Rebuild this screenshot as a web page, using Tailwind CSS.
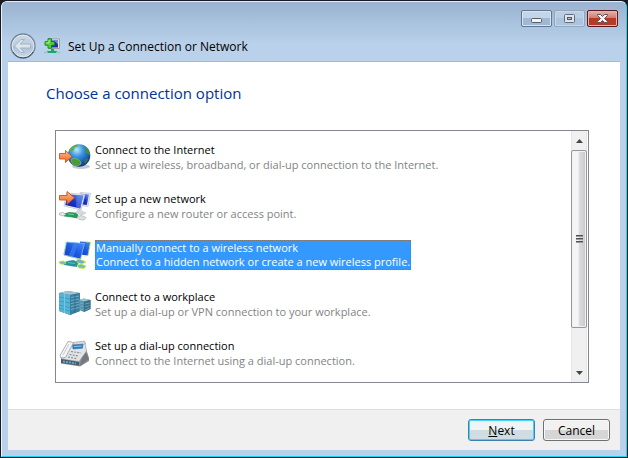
<!DOCTYPE html>
<html lang="en">
  <head>
    <meta charset="UTF-8" />
    <meta name="viewport" content="width=device-width, initial-scale=1.0" />
    <title>Set Up a Connection or Network</title>
    <script src="https://cdn.jsdelivr.net/npm/@tailwindcss/browser@4"></script>
  </head>
  <body class="bg-[#171a20] font-['Open_Sans','Noto_Sans',sans-serif] text-[11px] leading-[15px] text-black">
    <!-- window frame -->
    <div class="min-h-screen p-px">
      <div
        class="flex min-h-[calc(100vh-2px)] flex-col rounded-t-[6px] border border-t-[#e4edf6] border-r-[#22d3ee] border-b-[#22d3ee] border-l-[#eaf3fb] bg-[#b9d1ea] px-[6px] pb-[6px]"
      >
        <header class="-mx-[6px] rounded-t-[5px] bg-linear-to-b from-[#99b3d0] to-[#b9d1ea] to-70% px-[6px]">
          <div class="flex h-[30px] items-start justify-end gap-[2px] pt-2 pr-[2px]">
            <button
              aria-label="Minimize"
              class="flex h-[17px] w-[31px] items-center justify-center rounded-[2px] border border-[#62778f] bg-linear-to-b from-[#c3d5e9] from-50% to-[#9fb9d4] to-50% shadow-[inset_0_0_0_1px_#d8e5f3]"
            >
              <svg class="h-[13px] w-[13px]" viewBox="0 0 13 13">
                <rect x="1.5" y="6.5" width="10" height="4" rx="1" fill="#f4f4f4" stroke="#555b69" />
              </svg>
            </button>
            <button
              aria-label="Maximize"
              disabled
              class="flex h-[17px] w-[31px] items-center justify-center rounded-[2px] border border-[#91a7c0] bg-linear-to-b from-[#b9cee5] from-50% to-[#abc4df] to-50% shadow-[inset_0_0_0_1px_#c6d8eb]"
            >
              <svg class="h-[13px] w-[13px]" viewBox="0 0 13 13">
                <rect x="1.5" y="2.5" width="10" height="8" rx="1" fill="#e1e3e8" stroke="#666b79" />
                <rect x="4.5" y="5.5" width="4" height="2" fill="#a8c0dc" stroke="#50586a" />
              </svg>
            </button>
            <button
              aria-label="Close"
              class="flex h-[17px] w-[31px] items-center justify-center rounded-[2px] border border-[#5b1825] bg-linear-to-b from-[#e0a99c] from-10% via-[#d0796a] via-48% to-[#b83a24] to-50% shadow-[inset_0_0_0_1px_#e6b5aa]"
            >
              <svg class="h-[13px] w-[13px]" viewBox="0 0 13 13">
                <path
                  d="M1.500 2.500h3l2 2 2-2h3v1l-3 3 3 3v1h-3l-2-2-2 2h-3v-1l3-3-3-3z"
                  fill="#f5f5f5"
                  stroke="#54565f"
                />
              </svg>
            </button>
          </div>
          <div class="flex h-[30px] items-center gap-2 border-b border-[#a3bad3] pb-px pl-[2px]">
            <button aria-label="Back" disabled class="h-[26px] w-[26px]">
              <svg class="h-[26px] w-[26px]" viewBox="0 0 26 26">
                <defs>
                  <linearGradient id="back" x1="0" y1="0" x2="0" y2="1">
                    <stop offset="0" stop-color="#ccd9e6" />
                    <stop offset=".48" stop-color="#bdcddd" />
                    <stop offset=".5" stop-color="#a9bed2" />
                    <stop offset="1" stop-color="#c9dcec" />
                  </linearGradient>
                </defs>
                <circle cx="13" cy="13" r="12" fill="url(#back)" stroke="#748398" stroke-width="1.300" />
                <path d="M3 19a11.500 11.500 0 0 0 20 0" fill="none" stroke="#404c5e" />
                <circle cx="13" cy="13" r="10.800" fill="none" stroke="#dde8f1" />
                <path
                  d="M4.500 13l6.500-6.500h3.500l-4.300 4.500h10.300v4H10.200l4.300 4.500H11z"
                  fill="#dbe5ed"
                  stroke="#a3b5c6"
                  stroke-linejoin="round"
                />
              </svg>
            </button>
            <svg class="h-4 w-4" viewBox="0 0 16 16">
              <path d="M6 1h9.500v9.500H6z" fill="#e6e8e5" stroke="#8d9494" stroke-width=".8" />
              <path d="M7 2.500h7v7H7z" fill="#2430a4" />
              <path d="M10 2.500h4v4z" fill="#7c8be0" />
              <path d="M7 11h3v2h3v2H3v-2h4z" fill="#19a86b" />
              <path d="M0 14.500h4M12 14.500h4" stroke="#8ecfb4" stroke-width="1.500" />
              <path
                d="M4 .700h3.500v3h3v3.500h-3v3H4v-3H1V3.700h3z"
                fill="#4fd13d"
                stroke="#128415"
                stroke-width=".9"
              />
              <path d="M5 2v3H2.200" fill="none" stroke="#b7f5a4" />
            </svg>
            <span class="text-[12px]">Set Up a Connection or Network</span>
          </div>
        </header>

        <main class="flex flex-1 flex-col bg-white pt-5">
          <h1 class="px-[38px] text-[15px] leading-[22px] text-[#003399]">Choose a connection option</h1>

          <div class="mt-[26px] mr-[31px] mb-[26px] ml-[47px] flex flex-1 border border-[#828790]">
            <ul role="listbox" aria-label="Connection options" class="flex flex-1 flex-col gap-[17px] pt-[10px] pl-[3px]">
              <li role="option" class="flex h-8 items-center gap-1">
                <svg class="h-8 w-8" viewBox="0 0 32 32">
                  <defs>
                    <radialGradient id="globe" cx=".4" cy=".25" r=".75">
                      <stop offset="0" stop-color="#b9eaff" />
                      <stop offset=".4" stop-color="#3994df" />
                      <stop offset="1" stop-color="#0b3493" />
                    </radialGradient>
                    <linearGradient id="arrow" x1="0" y1="0" x2="0" y2="1">
                      <stop offset="0" stop-color="#ffb988" />
                      <stop offset="1" stop-color="#f0671e" />
                    </linearGradient>
                  </defs>
                  <ellipse cx="22" cy="25.500" rx="9" ry="2.500" fill="#c6c9cc" />
                  <circle cx="20" cy="14.500" r="11.300" fill="url(#globe)" />
                  <path d="M10.500 8.500c2-3 5-5 9-5l-1 2-3 1-1 3-3 1.500z" fill="#62ad45" />
                  <path d="M25 5c4 2 6 6 5.800 9l-3-1.500-2-4 .500-1.500z" fill="#47922e" />
                  <path d="M12 18.500c3-2 7-1 9.500 2l.500 2.500-4 2c-3 0-6-3-6-6.500z" fill="#4a9c30" stroke="#8bd062" stroke-width=".6" />
                  <path d="M27 17l2.500 1-3 4.500-1.500-1z" fill="#2f7e37" />
                  <path d="M.500 12.500h6v-3l6.500 6-6.500 6v-3.500h-6z" fill="url(#arrow)" stroke="#c25a26" stroke-width=".9" />
                </svg>
                <div>
                  <p>Connect to the Internet</p>
                  <p class="text-[#838383]">Set up a wireless, broadband, or dial-up connection to the Internet.</p>
                </div>
              </li>
              <li role="option" class="flex h-8 items-center gap-1">
                <svg class="h-8 w-8" viewBox="0 0 32 32">
                  <defs>
                    <linearGradient id="screen" x1="0" y1="1" x2="1" y2="0">
                      <stop offset="0" stop-color="#0718a5" />
                      <stop offset=".5" stop-color="#1836c8" />
                      <stop offset="1" stop-color="#7ea4f4" />
                    </linearGradient>
                  </defs>
                  <path d="M21 2.500l10.500.800-2.500 13.200-8-1z" fill="#e5e9ef" stroke="#b7bdc8" stroke-width=".7" />
                  <path d="M22 3.800l8 .700-2.200 10.500-6-.800z" fill="url(#screen)" />
                  <path d="M7.500 3l18.500 1.500-4 15.500L5 16z" fill="#edf0f4" stroke="#b9bfc9" stroke-width=".7" />
                  <path d="M8.500 4.200l16 1.300-3.300 13L6.300 15z" fill="url(#screen)" />
                  <path d="M17.500 4.900l7 .600-3.300 13-4-1z" fill="#5f83ea" opacity=".6" />
                  <path d="M19 20l3 .700 5 2.300-4 2-7-2z" fill="#d6dadd" stroke="#b5babf" stroke-width=".5" />
                  <path d="M5 24l5-1.500 6 .500 3 2-1 3-5-1-8-1z" fill="#19a258" stroke="#0b7a42" stroke-width=".6" />
                  <path d="M9 24l6 .500" stroke="#6fd39a" />
                  <path d="M.500 23l4-.500 2.500 2-3 1.500-3.500-1z" fill="#e3e7e6" stroke="#9faaa8" stroke-width=".6" />
                  <path d="M18 27l4-1.500 5 2-2 2.500-5-.500z" fill="#dce2e1" stroke="#9faaa8" stroke-width=".6" />
                  <path d="M.500 5.500H8v-4l7.500 6.300L8 14.300v-4.300H.500z" fill="url(#arrow)" stroke="#c25a26" stroke-width=".9" />
                </svg>
                <div>
                  <p>Set up a new network</p>
                  <p class="text-[#838383]">Configure a new router or access point.</p>
                </div>
              </li>
              <li role="option" aria-selected="true" class="flex h-8 items-center gap-1">
                <svg class="h-8 w-8" viewBox="0 0 32 32">
                  <defs>
                    <linearGradient id="screen2" x1="0" y1="1" x2="1" y2="0">
                      <stop offset="0" stop-color="#0a3cc4" />
                      <stop offset=".5" stop-color="#1d5be0" />
                      <stop offset="1" stop-color="#4a92fa" />
                    </linearGradient>
                  </defs>
                  <path d="M21 2.500l10.500.800-2.500 13.200-8-1z" fill="url(#screen2)" />
                  <path d="M22 2.300l9.500 1-2.500 13.200-4 .500" fill="none" stroke="#cbec28" stroke-dasharray="3 1" />
                  <path d="M7.500 3l18 1.500-4 15.500L5 16z" fill="url(#screen2)" stroke="#7fb6f5" stroke-width=".8" />
                  <path d="M15 3.800l4 .400-4.500 14-5-1z" fill="#4286f1" opacity=".6" />
                  <path d="M7 3l-2.500 13 17 4.500" fill="none" stroke="#b7de55" stroke-width=".8" stroke-dasharray="2 1.500" />
                  <path d="M19 20l3 .700 5 2.300-4 2-7-2z" fill="#6db0d6" stroke="#cbec28" stroke-width=".9" stroke-dasharray="3 1" />
                  <path d="M5 23.500l5-1.500 5-.500 4 3-1 3-5-.500-8-1.500z" fill="#2095a4" stroke="#187e8c" stroke-width=".6" />
                  <path d="M9 23.500l7 1" stroke="#5dc0c8" />
                  <path d="M.500 22.500l4-.500 2.500 2-3 1.500-3.500-1z" fill="#73bfb3" stroke="#cbec28" stroke-dasharray="2 1" />
                  <path d="M18 26.500l4-1.500 5 2-2 2.500-5-.500z" fill="#73bfb3" stroke="#cbec28" stroke-dasharray="3 1" />
                </svg>
                <div class="border border-dotted border-[#cc6600] bg-[#3399ff] text-white">
                  <p class="leading-[14px]">Manually connect to a wireless network</p>
                  <p class="leading-[14px]">Connect to a hidden network or create a new wireless profile.</p>
                </div>
              </li>
              <li role="option" class="flex h-8 items-center gap-1">
                <svg class="h-8 w-8" viewBox="0 0 32 32">
                  <path d="M0 5l9-2 12 2v18l-10 4-11-4z" fill="#3a87aa" />
                  <path d="M0 5l9-2 12 2-10 2z" fill="#9fc3d0" />
                  <path d="M0 5l11 2v20L0 23z" fill="#55b4d4" />
                  <path d="M0 9l11 2M0 13l11 2M0 17l11 2.500M0 20l11 3" stroke="#3191b6" stroke-width=".6" />
                  <path d="M5.500 6v19" stroke="#7fd0e6" stroke-width=".8" />
                  <path d="M11 7l10-2v18l-10 4z" fill="#3c7f9e" />
                  <path d="M12 9.500l8-1.500M12 12.500l8-1.500M12 15.500l8-1.500M12 18.500l8-2M12 21.500l8-2" stroke="#79b8d0" stroke-width=".8" />
                  <path d="M16 6v19" stroke="#2a6684" stroke-width=".7" />
                  <path d="M20 12l5-1.500 6.500 1.500v9l-6.500 3-5-2z" fill="#5493ad" />
                  <path d="M20 12l5 1.500 6.500-1.500-6.500-1.500z" fill="#a3c3cf" />
                  <path d="M25 13.500l6.500-1.500v9l-6.500 3z" fill="#3a6f89" />
                  <path d="M21 15l3 .500M21 18l3 .500M21 21l3 .500M26 16l4.500-1M26 19l4.500-1.500M26 22l4.500-2" stroke="#80b4c7" stroke-width=".7" />
                </svg>
                <div>
                  <p>Connect to a workplace</p>
                  <p class="text-[#838383]">Set up a dial-up or VPN connection to your workplace.</p>
                </div>
              </li>
              <li role="option" class="flex h-8 items-center gap-1">
                <svg class="h-8 w-8" viewBox="0 0 32 32">
                  <path d="M2 20l7-10 17-2 4 13v3l-9 5.500L2 26.500z" fill="#8d9296" />
                  <path d="M24 15l3.500 1 2.500 6-9 7z" fill="#74797e" />
                  <path d="M3 21L10 8l16-2.500 1.500 8.500-7.500 10.500L3 22z" fill="#e2e4e6" stroke="#9a9ea3" stroke-width=".6" />
                  <path d="M14 5.500l11.500-1.500 1 3-12 1z" fill="#d7d9db" stroke="#96999c" stroke-width=".6" />
                  <path d="M13.500 8l10.500-.800-.500 4-9.500.800z" fill="#2f80cc" stroke="#2b67a1" stroke-width=".5" />
                  <path d="M15 9.500l7.500-.500" stroke="#8ec4ef" />
                  <path d="M9 4.500l4 .500 1 1.500-7.500 14-4.500.500-1-2.500z" fill="#f3f3f4" stroke="#909498" stroke-width=".7" />
                  <path d="M10 7L4 18" stroke="#c9cccf" />
                  <path d="M12 14.500l10 1.500M10.500 17.500l9 1.500M9 20l9 1.800" stroke="#868c93" stroke-width="1.200" stroke-dasharray="2 1.200" />
                  <path d="M2 22l18 3v3.500L2 26z" fill="#4d5b65" />
                  <path d="M4 24.500l13 2" stroke="#56aedb" stroke-width="1.800" stroke-dasharray="2 1" />
                </svg>
                <div>
                  <p>Set up a dial-up connection</p>
                  <p class="text-[#838383]">Connect to the Internet using a dial-up connection.</p>
                </div>
              </li>
            </ul>

            <!-- scroll bar -->
            <div class="mr-px flex w-4 flex-col border-x border-[#e6e6e6] bg-[#f0f0f0]">
              <button aria-label="Scroll up" class="flex h-[19px] items-center justify-center">
                <svg class="h-1 w-[7px]" viewBox="0 0 7 4"><path d="M0 4L3.500 0 7 4z" fill="#454545" /></svg>
              </button>
              <div
                class="-mx-px flex h-[178px] flex-col items-center justify-center gap-px rounded-[2px] border border-[#979797] bg-linear-to-r from-[#f5f5f5] from-45% via-[#dddde0] via-50% to-[#c7c7cb] shadow-[inset_0_0_0_1px_#f2f2f2]"
              >
                <span class="h-[2px] w-[7px] border-t border-[#505050] bg-[#9a9a9a]"></span>
                <span class="h-[2px] w-[7px] border-t border-[#505050] bg-[#9a9a9a]"></span>
                <span class="h-[2px] w-[7px] border-t border-[#505050] bg-[#9a9a9a]"></span>
              </div>
              <button aria-label="Scroll down" class="mt-auto flex h-[19px] items-center justify-center">
                <svg class="h-1 w-[7px]" viewBox="0 0 7 4"><path d="M0 0h7L3.500 4z" fill="#454545" /></svg>
              </button>
            </div>
          </div>
        </main>

        <footer class="flex h-[41px] items-center justify-end gap-2 border-t border-[#dfdfdf] bg-[#f0f0f0] pr-[10px] text-[12px]">
          <button
            class="h-[22px] w-[67px] rounded-[3px] border border-[#3c7fb1] bg-linear-to-b from-[#f0f4f6] from-50% to-[#cfdde3] to-50% shadow-[inset_0_0_0_1px_#48d2f9]"
          >
            <u>N</u>ext
          </button>
          <button
            class="h-[22px] w-[67px] rounded-[3px] border border-[#707070] bg-linear-to-b from-[#f1f1f1] from-50% to-[#d6d6d6] to-50% shadow-[inset_0_0_0_1px_#f8f8f8]"
          >
            Cancel
          </button>
        </footer>
      </div>
    </div>
  </body>
</html>
